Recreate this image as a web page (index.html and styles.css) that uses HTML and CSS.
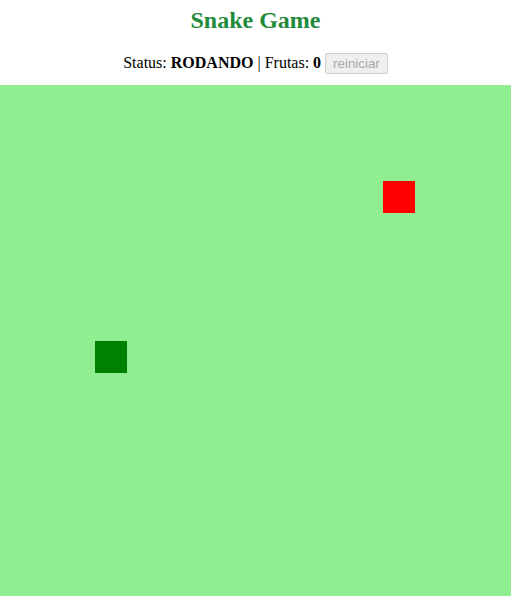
FILE: index.html
```html
<!DOCTYPE html>
<html lang="pt">
<head>
<meta charset="utf-8">
<title>Snake Game</title>
<link rel="stylesheet" href="styles.css">
</head>
<body>
<header class="top">
  <h1 class="title">Snake Game</h1>
  <div class="status">Status: <b>RODANDO</b> | Frutas: <b>0</b> <button class="restart" disabled>reiniciar</button></div>
</header>
<main class="board">
  <div class="cell fruit" style="left:383px;top:96px"></div>
  <div class="cell snake" style="left:95px;top:256px"></div>
</main>
</body>
</html>
```
FILE: styles.css
```css
html, body {
  margin: 0;
  padding: 0;
  background: #fff;
  font-family: "Liberation Serif", "Times New Roman", serif;
  color: #000;
}
.top {
  text-align: center;
  padding-top: 6px;
  height: 79px;
  box-sizing: border-box;
}
.title {
  margin: 0;
  font-size: 24px;
  line-height: 28px;
  font-weight: bold;
  color: #1f8b3b;
}
.status {
  margin-top: 18px;
  font-size: 16px;
  line-height: 22px;
}
.restart {
  font-family: "Liberation Sans", Arial, sans-serif;
  font-size: 13.333px;
  padding: 2px 7px;
  color: #a8a8a8;
  background: #efefef;
  border: 1px solid #d0d0d0;
  border-radius: 2px;
  vertical-align: 0;
}
.board {
  position: relative;
  margin-top: 6px;
  width: 100%;
  height: 512px;
  background: #90ee90;
}
.cell {
  position: absolute;
  width: 32px;
  height: 32px;
}
.fruit { background: #ff0000; }
.snake { background: #008000; }
```
